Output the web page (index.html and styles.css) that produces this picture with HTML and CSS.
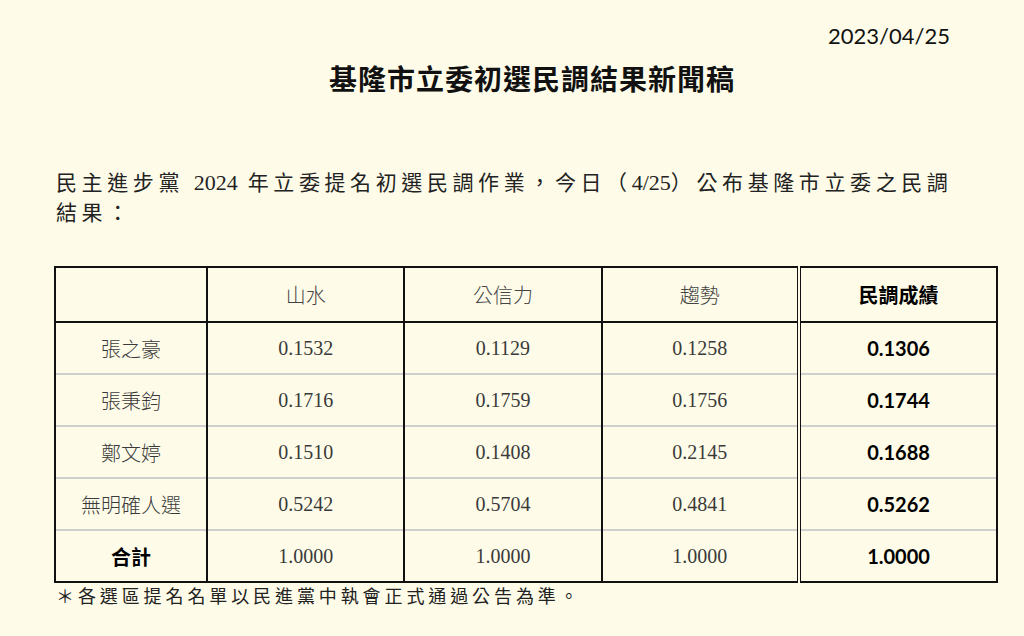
FILE: index.html
```html
<!DOCTYPE html>
<html lang="zh-Hant">
<head>
<meta charset="utf-8">
<link rel="stylesheet" href="styles.css">
</head>
<body>
<div class="page">
  <div class="date">2023/04/25</div>
  <h1 class="title">基隆市立委初選民調結果新聞稿</h1>
  <p class="intro">民主進步黨 <span class="num">2024</span> 年立委提名初選民調作業，今日（<span class="num">4/25</span>）公布基隆市立委之民調<br>結果：</p>
  <table class="results">
    <thead>
      <tr>
        <th class="name"></th>
        <th>山水</th>
        <th>公信力</th>
        <th>趨勢</th>
        <th class="score">民調成績</th>
      </tr>
    </thead>
    <tbody>
      <tr><td class="name">張之豪</td><td>0.1532</td><td>0.1129</td><td>0.1258</td><td class="score">0.1306</td></tr>
      <tr><td class="name">張秉鈞</td><td>0.1716</td><td>0.1759</td><td>0.1756</td><td class="score">0.1744</td></tr>
      <tr><td class="name">鄭文婷</td><td>0.1510</td><td>0.1408</td><td>0.2145</td><td class="score">0.1688</td></tr>
      <tr><td class="name">無明確人選</td><td>0.5242</td><td>0.5704</td><td>0.4841</td><td class="score">0.5262</td></tr>
      <tr class="total"><td class="name">合計</td><td>1.0000</td><td>1.0000</td><td>1.0000</td><td class="score">1.0000</td></tr>
    </tbody>
  </table>
  <p class="note">＊各選區提名名單以民進黨中執會正式通過公告為準。</p>
</div>
</body>
</html>
```
FILE: styles.css
```css
html, body {
  margin: 0;
  padding: 0;
  background: #fefce9;
}
.page {
  width: 1024px;
  height: 636px;
  box-sizing: border-box;
  padding: 20px 0 0 0;
  color: #111;
}
.date {
  font-family: "Lato", "Liberation Sans", sans-serif;
  font-size: 22px;
  line-height: 32px;
  text-align: right;
  padding-right: 74px;
  color: #111;
}
.title {
  margin: 8px 0 0 0;
  padding-left: 40px;
  text-align: center;
  font-family: "Noto Sans CJK TC", sans-serif;
  font-weight: 700;
  font-size: 28px;
  line-height: 36px;
  letter-spacing: 1px;
  color: #111;
}
.intro {
  margin: 72px 0 0 56px;
  font-family: "Liberation Serif", "Noto Sans CJK TC", serif;
  font-size: 21px;
  line-height: 30px;
  letter-spacing: 4.6px;
  color: #222;
  white-space: nowrap;
}
.intro .num {
  letter-spacing: 0;
  font-size: 22px;
}
.results {
  margin: 38px 0 0 54px;
  width: 944px;
  border-collapse: collapse;
  border: 2px solid #111;
  table-layout: fixed;
}
.results th,
.results td {
  border-left: 2px solid #111;
  border-right: 2px solid #111;
  text-align: center;
  padding: 0;
  font-family: "Liberation Serif", "Noto Sans CJK TC", serif;
  font-weight: 300;
  font-size: 20px;
  color: #3a3a3a;
}
.results th {
  height: 53px;
  border-bottom: 2px solid #111;
  font-family: "Noto Sans CJK TC", sans-serif;
  font-weight: 300;
  font-size: 20px;
  color: #444;
}
.results td {
  height: 50px;
  border-top: 2px solid #cfcfcf;
}
.results tbody tr:first-child td {
  border-top: 2px solid #111;
}
.results .name {
  width: 150px;
  font-family: "Noto Sans CJK TC", sans-serif;
  font-weight: 300;
}
.results .score {
  width: 195px;
  border-left: 4px double #111;
  font-family: "Lato", "Noto Sans CJK TC", sans-serif;
  font-weight: 700;
  font-size: 20px;
  color: #000;
}
.results th.score {
  font-family: "Noto Sans CJK TC", sans-serif;
  font-weight: 700;
  font-size: 20px;
}
.results .total .name {
  font-weight: 700;
  color: #000;
  font-size: 20px;
}
.note {
  margin: 0 0 0 56px;
  font-family: "Noto Sans CJK TC", sans-serif;
  font-size: 18px;
  line-height: 24px;
  letter-spacing: 3.9px;
  color: #222;
}
```
